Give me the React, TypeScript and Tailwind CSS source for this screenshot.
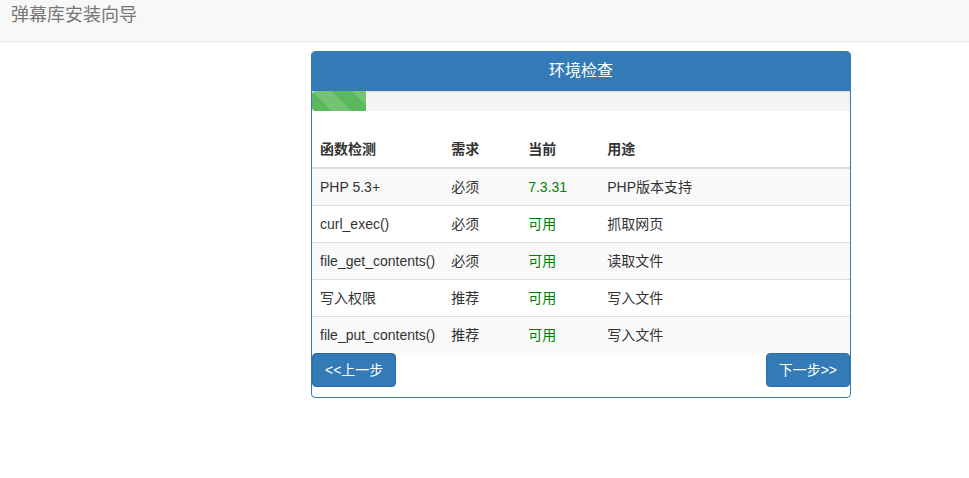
const rows = [
  { name: "PHP 5.3+", need: "必须", cur: "7.3.31", use: "PHP版本支持" },
  { name: "curl_exec()", need: "必须", cur: "可用", use: "抓取网页" },
  { name: "file_get_contents()", need: "必须", cur: "可用", use: "读取文件" },
  { name: "写入权限", need: "推荐", cur: "可用", use: "写入文件" },
  { name: "file_put_contents()", need: "推荐", cur: "可用", use: "写入文件" },
];

export default function App() {
  return (
    <div className="min-h-[478px] bg-white text-[14px] leading-[20px] text-[#333] font-['Liberation_Sans','Noto_Sans_CJK_SC',sans-serif]">
      <nav className="h-[42px] border-b border-[#e7e7e7] bg-[#f8f8f8] px-[11px]">
        <span className="block pt-[4px] text-[18px] leading-[22px] text-[#777]">弹幕库安装向导</span>
      </nav>

      <div className="ml-[311px] mt-[9px] w-[540px] rounded-[4px] border border-[#337ab7] bg-white">
        <div className="rounded-t-[3px] bg-[#337ab7] px-[15px] pb-[10px] pt-[9px] text-center text-[16px] leading-[20px] text-white">
          环境检查
        </div>

        <div className="mb-[20px] h-[20px] overflow-hidden bg-[#f5f5f5] shadow-[inset_0_1px_2px_rgba(0,0,0,0.1)]">
          <div className="h-full w-[10%] rounded-l-[4px] bg-[#5cb85c] bg-[linear-gradient(45deg,rgba(255,255,255,0.15)_25%,transparent_25%,transparent_50%,rgba(255,255,255,0.15)_50%,rgba(255,255,255,0.15)_75%,transparent_75%,transparent)] bg-[length:40px_40px]" />
        </div>

        <table className="w-full border-collapse">
          <thead>
            <tr className="border-b-2 border-[#ddd] text-left">
              <th className="w-[131px] p-[8px] font-bold">函数检测</th>
              <th className="w-[77px] p-[8px] font-bold">需求</th>
              <th className="w-[79px] p-[8px] font-bold">当前</th>
              <th className="p-[8px] font-bold">用途</th>
            </tr>
          </thead>
          <tbody>
            {rows.map((r, i) => (
              <tr key={r.name} className={`${i > 0 ? "border-t border-[#ddd]" : ""} ${i % 2 === 0 ? "bg-[#f9f9f9]" : ""}`}>
                <td className="whitespace-nowrap p-[8px]">{r.name}</td>
                <td className="p-[8px]">{r.need}</td>
                <td className="p-[8px] text-[#008000]">{r.cur}</td>
                <td className="p-[8px]">{r.use}</td>
              </tr>
            ))}
          </tbody>
        </table>

        <div className="mb-[10px] flex justify-between">
          <button className="rounded-[4px] border border-[#2e6da4] bg-[#337ab7] px-[12px] py-[6px] text-white">&lt;&lt;上一步</button>
          <button className="rounded-[4px] border border-[#2e6da4] bg-[#337ab7] px-[12px] py-[6px] text-white">下一步&gt;&gt;</button>
        </div>
      </div>
    </div>
  );
}
